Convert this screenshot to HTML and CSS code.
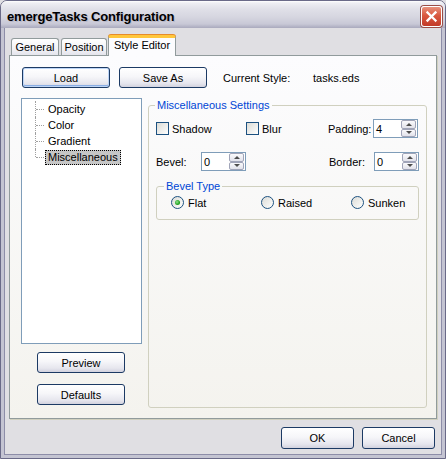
FILE: index.html
```html
<!DOCTYPE html>
<html>
<head>
<meta charset="utf-8">
<title>emergeTasks Configuration</title>
<link rel="stylesheet" href="styles.css">
</head>
<body>
<div class="window">
  <div class="titlebar">
    <span class="title">emergeTasks Configuration</span>
    <span class="close">
      <svg width="21" height="21" viewBox="0 0 21 21"><path d="M6.5 6.5 L14.5 14.5 M14.5 6.5 L6.5 14.5" stroke="#fff" stroke-width="2.3" stroke-linecap="square" fill="none"/></svg>
    </span>
  </div>
  <div class="client">
    <div class="tabs">
      <div class="tab t-general">General</div>
      <div class="tab t-position">Position</div>
      <div class="tab t-style active">Style Editor</div>
    </div>
    <div class="panel">
      <div class="toprow">
        <button class="btn default w88">Load</button>
        <button class="btn w88 gap10">Save As</button>
        <span class="cur-label">Current Style:</span>
        <span class="cur-value">tasks.eds</span>
      </div>
      <div class="main">
        <div class="leftcol">
          <div class="tree">
            <ul class="tree-list">
              <li class="node"><span class="label">Opacity</span></li>
              <li class="node"><span class="label">Color</span></li>
              <li class="node"><span class="label">Gradient</span></li>
              <li class="node last"><span class="label selected">Miscellaneous</span></li>
            </ul>
          </div>
          <button class="btn side preview">Preview</button>
          <button class="btn side defaults">Defaults</button>
        </div>
        <fieldset class="group misc">
          <legend>Miscellaneous Settings</legend>
          <div class="row row-a">
            <label class="check w90"><span class="box"></span>Shadow</label>
            <label class="check w82"><span class="box"></span>Blur</label>
            <span class="flabel">Padding:</span>
            <span class="spin"><span class="val">4</span><span class="spinbtns"><span class="sb up"></span><span class="sb down"></span></span></span>
          </div>
          <div class="row row-b">
            <span class="flabel">Bevel:</span>
            <span class="spin"><span class="val">0</span><span class="spinbtns"><span class="sb up"></span><span class="sb down"></span></span></span>
            <span class="flabel push">Border:</span>
            <span class="spin"><span class="val">0</span><span class="spinbtns"><span class="sb up"></span><span class="sb down"></span></span></span>
          </div>
          <fieldset class="group bevel">
            <legend>Bevel Type</legend>
            <div class="radios">
              <label class="radio"><span class="circle on"></span>Flat</label>
              <label class="radio"><span class="circle"></span>Raised</label>
              <label class="radio last"><span class="circle"></span>Sunken</label>
            </div>
          </fieldset>
        </fieldset>
      </div>
    </div>
    <div class="bottom">
      <button class="btn dlg">OK</button>
      <button class="btn dlg">Cancel</button>
    </div>
  </div>
</div>
</body>
</html>
```
FILE: styles.css
```css
html, body {
  margin: 0;
  padding: 0;
  background: #e0dfe3;
}
body {
  font-family: "Liberation Sans", Arial, sans-serif;
  font-size: 11px;
  color: #000;
}
.window {
  width: 446px;
  height: 459px;
  box-sizing: border-box;
  border: 1px solid #6a6a88;
  border-radius: 7px 7px 0 0;
  overflow: hidden;
  display: flex;
  flex-direction: column;
  background: #e0dfe3;
}
.titlebar {
  height: 27px;
  flex: none;
  display: flex;
  align-items: center;
  padding-left: 6px;
  background: linear-gradient(#ffffff 0px, #eeeef3 2px, #e0e0e8 8px, #d6d6e0 16px, #c8c8d6 23px, #a9a9bd 27px);
}
.title {
  font-weight: bold;
  font-size: 13px;
  letter-spacing: -0.15px;
  color: #000;
  text-shadow: 1px 1px 0 #b8b8c8;
  padding-top: 3px;
}
.close {
  margin-left: auto;
  margin-right: 3px;
  margin-top: 3px;
  width: 21px;
  height: 21px;
  box-sizing: border-box;
  border: 1px solid #fff;
  border-radius: 3px;
  background: linear-gradient(#e7917c, #d9583f 45%, #c23a28);
  box-shadow: 0 0 0 1px #9a4d46;
  display: flex;
}
.close svg { margin: -1px; }
.client {
  flex: 1;
  border: solid #c4c4d2;
  border-width: 0 3px 3px;
  box-shadow: inset 1px 0 #8d8da8, inset -1px 0 #8d8da8, inset 0 -1px #8d8da8;
  padding: 8px 4px 0 5px;
  display: flex;
  flex-direction: column;
}
.tabs {
  height: 19px;
  display: flex;
  align-items: flex-end;
  padding-left: 2px;
  position: relative;
  z-index: 2;
}
.tab {
  height: 17px;
  box-sizing: border-box;
  border: 1px solid #919b9c;
  border-bottom: none;
  border-radius: 3px 3px 0 0;
  background: linear-gradient(#ffffff, #f3f3f7 60%, #e4e4ec);
  text-align: center;
  line-height: 16px;
  margin-bottom: 0;
}
.t-general { width: 48px; margin-right: 2px; }
.t-position { width: 46px; margin-right: 1px; }
.tab.active {
  width: 68px;
  height: 21px;
  margin-bottom: -1px;
  border-top: 3px solid #ffc73c;
  box-shadow: 0 -1px 0 #e68b2c;
  background: #fcfcfe;
  line-height: 15px;
  border-radius: 3px 3px 0 0;
}
.panel {
  height: 364px;
  box-sizing: border-box;
  border: 1px solid #919b9c;
  box-shadow: 1px 1px 0 #d0d0bf;
  background: linear-gradient(#fcfcfe, #f4f3ee);
  padding: 11px 0 0 12px;
  margin-right: 1px;
}
.toprow {
  display: flex;
  align-items: center;
  height: 21px;
}
.btn {
  font-family: "Liberation Sans", Arial, sans-serif;
  font-size: 11px;
  color: #000;
  height: 21px;
  box-sizing: border-box;
  border: 1px solid #1c3a64;
  border-radius: 3px;
  background: linear-gradient(#ffffff, #f6f6f9 45%, #e6e6ee 80%, #d2d2de);
  padding: 0;
  margin: 0;
  display: block;
}
.btn.default {
  box-shadow: inset 0 0 0 1px #bcd4f6, inset 0 -1px 0 1px #89ade4;
}
.w88 { width: 88px; }
.gap10 { margin-left: 9px; }
.cur-label {
  margin-left: 16px;
  width: 90px;
}
.main {
  display: flex;
  margin-top: 10px;
}
.leftcol {
  width: 121px;
  margin-left: -1px;
  flex: none;
}
.tree {
  height: 246px;
  box-sizing: border-box;
  border: 1px solid #7f9db9;
  background: #fff;
  padding-top: 2px;
}
.tree-list {
  list-style: none;
  margin: 0;
  padding: 0;
}
.node {
  height: 16px;
  position: relative;
  padding-left: 23px;
  display: flex;
  align-items: center;
}
.node::before {
  content: "";
  position: absolute;
  left: 13px;
  top: 0;
  height: 16px;
  border-left: 1px dotted #a0a0a0;
}
.node.last::before { height: 8px; }
.node::after {
  content: "";
  position: absolute;
  left: 14px;
  top: 8px;
  width: 8px;
  border-top: 1px dotted #a0a0a0;
}
.label {
  padding: 0 2px;
  height: 15px;
  box-sizing: border-box;
  border: 1px solid transparent;
  display: block;
  line-height: 13px;
}
.label.selected {
  background: #c6c6c6;
  border: 1px dotted #000;
}
.btn.side {
  width: 88px;
  margin-left: 16px;
}
.preview { margin-top: 8px; }
.defaults { margin-top: 11px; }
.group {
  border: 1px solid #d0d0bf;
  border-radius: 3px;
  margin: 0;
  min-width: 0;
}
.group legend {
  color: #0046d5;
  padding: 0 2px;
  line-height: 13px;
  margin-left: -1px;
}
.misc {
  width: 279px;
  height: 309px;
  box-sizing: border-box;
  margin-left: 6px;
  margin-top: 1px;
  padding: 0 7px 0 7px;
}
.row {
  display: flex;
  align-items: center;
  height: 19px;
}
.row-a { margin-top: 7px; }
.row-b { margin-top: 14px; }
.check {
  display: flex;
  align-items: center;
}
.w90 { width: 90px; }
.w82 { width: 82px; }
.box {
  width: 13px;
  height: 13px;
  box-sizing: border-box;
  border: 1px solid #1c5180;
  background: linear-gradient(135deg, #dcdcd7, #f4f4f2 70%, #ffffff);
  margin-right: 3px;
  flex: none;
}
.flabel { width: 45px; flex: none; }
.flabel.push { margin-left: auto; }
.spin {
  width: 45px;
  height: 19px;
  box-sizing: border-box;
  border: 1px solid #7f9db9;
  background: #fff;
  display: flex;
  align-items: center;
  flex: none;
}
.val { padding-left: 2px; flex: 1; }
.spinbtns {
  width: 15px;
  height: 17px;
  display: flex;
  flex-direction: column;
  margin-right: 1px;
}
.sb {
  flex: 1;
  box-sizing: border-box;
  border: 1px solid #a0a4b8;
  border-radius: 2px;
  background: linear-gradient(#fafafc, #e2e2ea);
  display: flex;
  align-items: center;
  justify-content: center;
}
.sb.up::before {
  content: "";
  border-left: 3px solid transparent;
  border-right: 3px solid transparent;
  border-bottom: 3px solid #4d4d4d;
}
.sb.down::before {
  content: "";
  border-left: 3px solid transparent;
  border-right: 3px solid transparent;
  border-top: 3px solid #4d4d4d;
}
.bevel {
  width: 263px;
  height: 40px;
  box-sizing: border-box;
  margin-top: 9px;
  padding: 0 7px 0 7px;
}
.bevel legend { margin-left: 0; }
.radios {
  display: flex;
  margin-top: 3px;
  height: 13px;
  align-items: center;
  padding-left: 7px;
}
.radio {
  width: 90px;
  flex: none;
  display: flex;
  align-items: center;
}
.radio.last { width: auto; }
.circle {
  width: 13px;
  height: 13px;
  box-sizing: border-box;
  border: 1px solid #1c5180;
  border-radius: 50%;
  background: linear-gradient(135deg, #dcdcd7, #f4f4f2 70%, #ffffff);
  margin-right: 4px;
  display: flex;
  align-items: center;
  justify-content: center;
  flex: none;
}
.circle.on::before {
  content: "";
  width: 5px;
  height: 5px;
  border-radius: 50%;
  background: radial-gradient(circle at 40% 40%, #8fe38f, #21a121 60%, #178717);
}
.bottom {
  display: flex;
  justify-content: flex-end;
  margin-top: 8px;
  margin-right: 3px;
}
.btn.dlg {
  width: 73px;
  height: 22px;
  margin-left: 8px;
}
```
